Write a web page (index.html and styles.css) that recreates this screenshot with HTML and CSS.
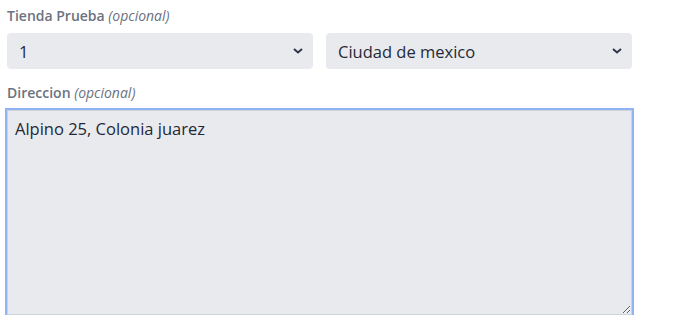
FILE: index.html
```html
<!DOCTYPE html>
<html lang="es">
<head>
  <meta charset="UTF-8" />
  <meta name="viewport" content="width=device-width, initial-scale=1.0"/>
  <title>Tienda y direccion</title>
  <link rel="stylesheet" href="styles.css">
</head>
<body>

<form class="store-form">
  <div class="field">
    <label class="field-label" for="store">Tienda Prueba <em>(opcional)</em></label>
    <div class="select-row">
      <div class="select-wrap">
        <select id="store">
          <option>1</option>
          <option>2</option>
        </select>
        <svg class="chevron" viewBox="0 0 10 6" width="10" height="6"><path d="M1 1l4 3.5L9 1" fill="none" stroke="#2d3748" stroke-width="2"/></svg>
      </div>
      <div class="select-wrap">
        <select id="city">
          <option>Ciudad de mexico</option>
          <option>Guadalajara</option>
        </select>
        <svg class="chevron" viewBox="0 0 10 6" width="10" height="6"><path d="M1 1l4 3.5L9 1" fill="none" stroke="#2d3748" stroke-width="2"/></svg>
      </div>
    </div>
  </div>

  <div class="field">
    <label class="field-label" for="address">Direccion <em>(opcional)</em></label>
    <textarea id="address" class="focused" spellcheck="false">Alpino 25, Colonia juarez</textarea>
  </div>
</form>

</body>
</html>
```

FILE: styles.css
```css
body {
  margin: 0;
  background: #ffffff;
  font-family: "Open Sans", "Noto Sans", Arial, sans-serif;
  color: #1f2937;
}

.store-form {
  width: 625px;
  padding: 6px 0 0 7px;
}

.field-label {
  display: block;
  font-size: 14px;
  font-weight: 600;
  color: #6b7280;
  line-height: 20px;
  margin-bottom: 7px;
}

.field-label em {
  font-weight: 400;
}

.select-row {
  display: grid;
  grid-template-columns: 1fr 1fr;
  gap: 13px;
  margin-bottom: 14px;
}

.select-wrap {
  position: relative;
}

.select-wrap select {
  width: 100%;
  height: 36px;
  appearance: none;
  -webkit-appearance: none;
  border: none;
  border-radius: 4px;
  background: #e9eaee;
  padding: 0 12px;
  font-family: inherit;
  font-size: 16.5px;
  color: #1f2937;
}

.chevron {
  position: absolute;
  right: 10px;
  top: 15px;
  pointer-events: none;
}

textarea {
  display: block;
  box-sizing: border-box;
  width: 100%;
  height: 205px;
  background: #e9eaee;
  border: 1px solid #cfd2d8;
  border-radius: 0;
  padding: 6px 7px;
  font-family: inherit;
  font-size: 16.5px;
  line-height: 24px;
  color: #1f2937;
  resize: vertical;
}

textarea.focused {
  outline: 2px solid #8fb3f7;
  outline-offset: 0;
}
```
